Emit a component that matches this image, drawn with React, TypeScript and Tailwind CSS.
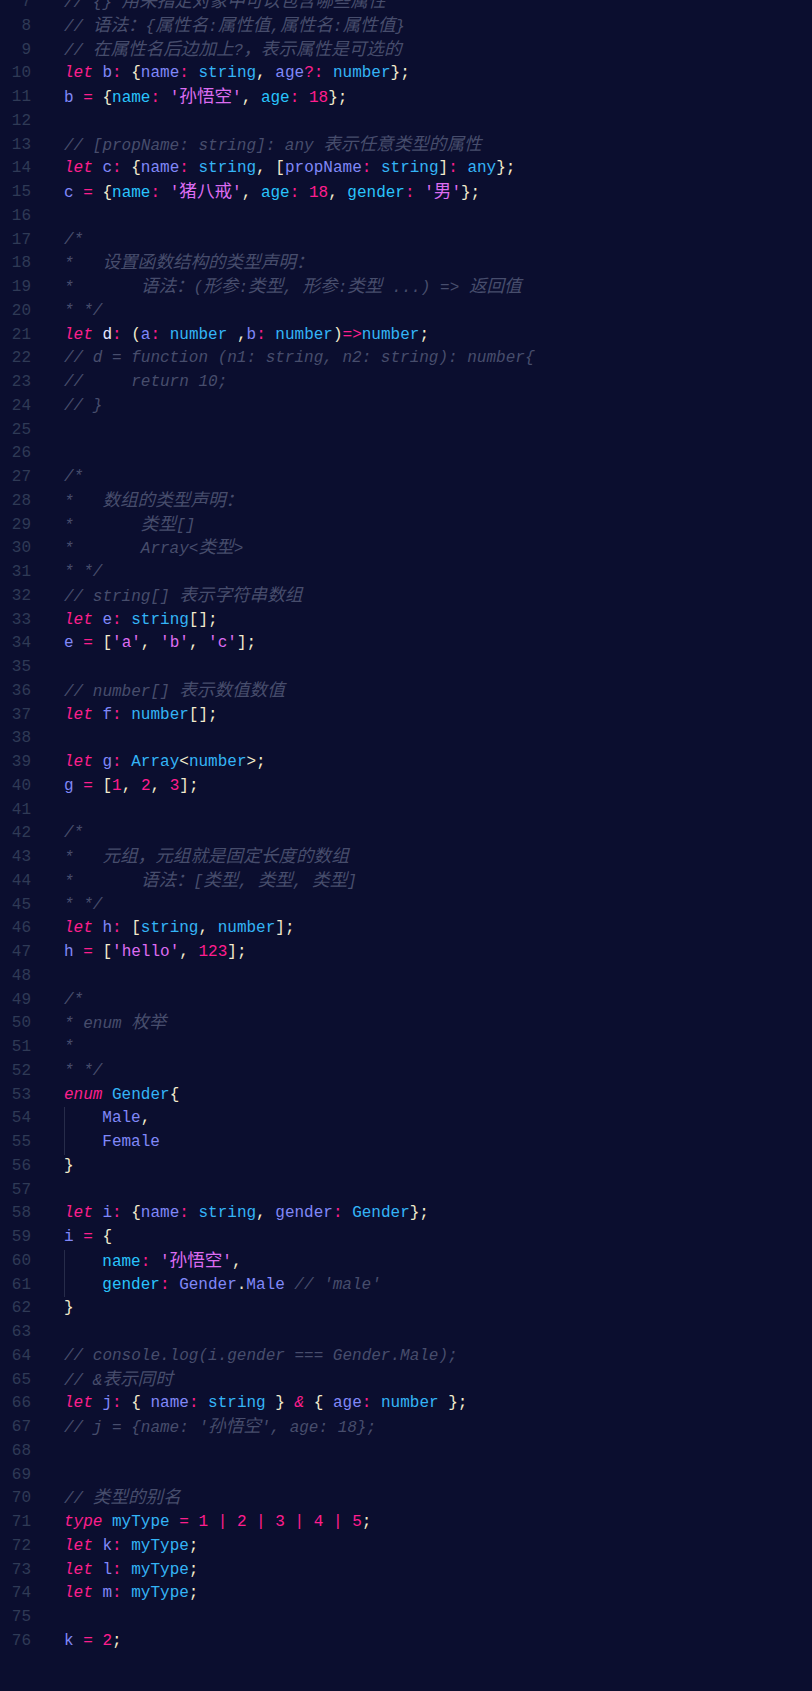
import React from 'react';

type Tok = [string, string];

const tokenClass: Record<string, string> = {
  k: 'text-[#fb1f8c] italic',
  v: 'text-[#8088f8]',
  w: 'text-[#e6e6ff]',
  t: 'text-[#34b4f6]',
  p: 'text-[#29c4fc]',
  o: 'text-[#fb1f8c]',
  oi: 'text-[#fb1f8c] italic',
  n: 'text-[#ff1d8e]',
  s: 'text-[#dd6cf1]',
  b: 'text-[#f2ebcd]',
  c: 'text-[#474d6c] italic',
  _: '',
};

const _ = (): Tok => ['_', ' '];

type Line = { indent?: boolean; toks: Tok[] };

const c = (text: string): Line => ({ toks: [['c', text]] });
const empty: Line = { toks: [] };

const lines: Line[] = [
  c('// {} 用来指定对象中可以包含哪些属性'),
  c('// 语法：{属性名:属性值,属性名:属性值}'),
  c('// 在属性名后边加上?，表示属性是可选的'),
  { toks: [['k', 'let'], _(), ['v', 'b'], ['o', ':'], _(), ['b', '{'], ['v', 'name'], ['o', ':'], _(), ['t', 'string'], ['b', ','], _(), ['v', 'age'], ['o', '?:'], _(), ['t', 'number'], ['b', '};']] },
  { toks: [['v', 'b'], _(), ['o', '='], _(), ['b', '{'], ['p', 'name'], ['o', ':'], _(), ['s', "'孙悟空'"], ['b', ','], _(), ['p', 'age'], ['o', ':'], _(), ['n', '18'], ['b', '};']] },
  empty,
  c('// [propName: string]: any 表示任意类型的属性'),
  { toks: [['k', 'let'], _(), ['v', 'c'], ['o', ':'], _(), ['b', '{'], ['v', 'name'], ['o', ':'], _(), ['t', 'string'], ['b', ','], _(), ['b', '['], ['v', 'propName'], ['o', ':'], _(), ['t', 'string'], ['b', ']'], ['o', ':'], _(), ['t', 'any'], ['b', '};']] },
  { toks: [['v', 'c'], _(), ['o', '='], _(), ['b', '{'], ['p', 'name'], ['o', ':'], _(), ['s', "'猪八戒'"], ['b', ','], _(), ['p', 'age'], ['o', ':'], _(), ['n', '18'], ['b', ','], _(), ['p', 'gender'], ['o', ':'], _(), ['s', "'男'"], ['b', '};']] },
  empty,
  c('/*'),
  c('*   设置函数结构的类型声明：'),
  c('*       语法：(形参:类型, 形参:类型 ...) => 返回值'),
  c('* */'),
  { toks: [['k', 'let'], _(), ['w', 'd'], ['o', ':'], _(), ['b', '('], ['v', 'a'], ['o', ':'], _(), ['t', 'number'], _(), ['b', ','], ['v', 'b'], ['o', ':'], _(), ['t', 'number'], ['b', ')'], ['o', '=>'], ['t', 'number'], ['b', ';']] },
  c('// d = function (n1: string, n2: string): number{'),
  c('//     return 10;'),
  c('// }'),
  empty,
  empty,
  c('/*'),
  c('*   数组的类型声明：'),
  c('*       类型[]'),
  c('*       Array<类型>'),
  c('* */'),
  c('// string[] 表示字符串数组'),
  { toks: [['k', 'let'], _(), ['v', 'e'], ['o', ':'], _(), ['t', 'string'], ['b', '[];']] },
  { toks: [['v', 'e'], _(), ['o', '='], _(), ['b', '['], ['s', "'a'"], ['b', ','], _(), ['s', "'b'"], ['b', ','], _(), ['s', "'c'"], ['b', '];']] },
  empty,
  c('// number[] 表示数值数值'),
  { toks: [['k', 'let'], _(), ['v', 'f'], ['o', ':'], _(), ['t', 'number'], ['b', '[];']] },
  empty,
  { toks: [['k', 'let'], _(), ['v', 'g'], ['o', ':'], _(), ['t', 'Array'], ['b', '<'], ['t', 'number'], ['b', '>;']] },
  { toks: [['v', 'g'], _(), ['o', '='], _(), ['b', '['], ['n', '1'], ['b', ','], _(), ['n', '2'], ['b', ','], _(), ['n', '3'], ['b', '];']] },
  empty,
  c('/*'),
  c('*   元组，元组就是固定长度的数组'),
  c('*       语法：[类型, 类型, 类型]'),
  c('* */'),
  { toks: [['k', 'let'], _(), ['v', 'h'], ['o', ':'], _(), ['b', '['], ['t', 'string'], ['b', ','], _(), ['t', 'number'], ['b', '];']] },
  { toks: [['v', 'h'], _(), ['o', '='], _(), ['b', '['], ['s', "'hello'"], ['b', ','], _(), ['n', '123'], ['b', '];']] },
  empty,
  c('/*'),
  c('* enum 枚举'),
  c('*'),
  c('* */'),
  { toks: [['k', 'enum'], _(), ['t', 'Gender'], ['b', '{']] },
  { indent: true, toks: [['v', 'Male'], ['b', ',']] },
  { indent: true, toks: [['v', 'Female']] },
  { toks: [['b', '}']] },
  empty,
  { toks: [['k', 'let'], _(), ['v', 'i'], ['o', ':'], _(), ['b', '{'], ['v', 'name'], ['o', ':'], _(), ['t', 'string'], ['b', ','], _(), ['v', 'gender'], ['o', ':'], _(), ['t', 'Gender'], ['b', '};']] },
  { toks: [['v', 'i'], _(), ['o', '='], _(), ['b', '{']] },
  { indent: true, toks: [['p', 'name'], ['o', ':'], _(), ['s', "'孙悟空'"], ['b', ',']] },
  { indent: true, toks: [['p', 'gender'], ['o', ':'], _(), ['v', 'Gender'], ['b', '.'], ['v', 'Male'], _(), ['c', "// 'male'"]] },
  { toks: [['b', '}']] },
  empty,
  c('// console.log(i.gender === Gender.Male);'),
  c('// &表示同时'),
  { toks: [['k', 'let'], _(), ['v', 'j'], ['o', ':'], _(), ['b', '{'], _(), ['v', 'name'], ['o', ':'], _(), ['t', 'string'], _(), ['b', '}'], _(), ['oi', '&'], _(), ['b', '{'], _(), ['v', 'age'], ['o', ':'], _(), ['t', 'number'], _(), ['b', '};']] },
  c("// j = {name: '孙悟空', age: 18};"),
  empty,
  empty,
  c('// 类型的别名'),
  { toks: [['k', 'type'], _(), ['t', 'myType'], _(), ['o', '='], _(), ['n', '1'], _(), ['oi', '|'], _(), ['n', '2'], _(), ['oi', '|'], _(), ['n', '3'], _(), ['oi', '|'], _(), ['n', '4'], _(), ['oi', '|'], _(), ['n', '5'], ['b', ';']] },
  { toks: [['k', 'let'], _(), ['v', 'k'], ['o', ':'], _(), ['t', 'myType'], ['b', ';']] },
  { toks: [['k', 'let'], _(), ['v', 'l'], ['o', ':'], _(), ['t', 'myType'], ['b', ';']] },
  { toks: [['k', 'let'], _(), ['v', 'm'], ['o', ':'], _(), ['t', 'myType'], ['b', ';']] },
  empty,
  { toks: [['v', 'k'], _(), ['o', '='], _(), ['n', '2'], ['b', ';']] },
];

// CJK glyphs in the shot are a touch wider than the mono cell
function withCjk(text: string) {
  const parts = text.split(/([\u3000-\u303f\u4e00-\u9fff\uff00-\uffef]+)/);
  return parts.map((part, i) =>
    i % 2 === 1 ? (
      <span key={i} className="text-[17.6px]">
        {part}
      </span>
    ) : (
      part
    )
  );
}

export default function App() {
  return (
    <div className="min-h-screen w-full overflow-hidden bg-[#0b0e2f] font-['Liberation_Mono','Noto_Sans_CJK_SC',monospace] text-[16px] leading-[23.75px]">
      <div className="-mt-[9px] flex flex-col">
        {lines.map((line, idx) => (
          <div key={idx} className="flex h-[23.75px] whitespace-pre">
            <div className="w-[31px] shrink-0 text-right text-[#2f3a56]">{idx + 7}</div>
            <div className="ml-[33px] flex">
              {line.indent && <div className="w-[38.3px] shrink-0 border-l border-[#272c4a]" />}
              <div>
                {line.toks.map(([kind, text], i) => (
                  <span key={i} className={tokenClass[kind]}>
                    {withCjk(text)}
                  </span>
                ))}
              </div>
            </div>
          </div>
        ))}
      </div>
    </div>
  );
}
